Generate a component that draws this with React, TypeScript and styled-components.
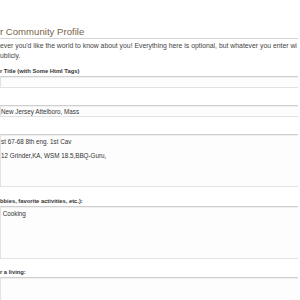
import { createGlobalStyle, styled } from "styled-components";

const GlobalStyle = createGlobalStyle`
  html, body {
    margin: 0;
    padding: 0;
    background: #ffffff;
  }
  body {
    font-family: "Liberation Sans", Arial, sans-serif;
    color: #3a3a3a;
    overflow: hidden;
  }
`;

const Page = styled.div`
  width: 298px;
  padding-top: 26px;
`;

const Title = styled.h1`
  margin: 0;
  font-size: 9.6px;
  font-weight: normal;
  line-height: 12px;
  color: #7a5f47;
  border-bottom: 1px solid #d6d6d6;
`;

const Intro = styled.p`
  margin: 2px 0 0;
  font-size: 6.85px;
  line-height: 10px;
  color: #444;
  white-space: nowrap;
`;

const Form = styled.div`
  display: flex;
  flex-direction: column;
  margin-top: 6px;
`;

const Field = styled.div<{ $gap?: number }>`
  display: flex;
  flex-direction: column;
  margin-bottom: ${(p) => p.$gap ?? 8}px;
`;

const Label = styled.div`
  font-size: 5.8px;
  font-weight: bold;
  line-height: 9px;
  height: 9px;
  color: #333;
  white-space: nowrap;
`;

const Box = styled.div<{ $rows?: number }>`
  height: ${(p) => (p.$rows ? p.$rows : 12)}px;
  box-sizing: border-box;
  border: 1px solid #e2e2e2;
  border-top: 1px solid #cfcfcf;
  border-right: none;
  box-shadow: inset 0 1px 1px #efefef;
  background: #fdfdfd;
  font-size: 6.3px;
  line-height: 7px;
  padding: ${(p) => (p.$rows ? "3px 0 0" : "2px 0 0")};
  white-space: pre;
  color: #333;
  overflow: hidden;
`;

export default function App() {
  return (
    <>
      <GlobalStyle />
      <Page>
        <Title>r Community Profile</Title>
        <Intro>
          ever you'd like the world to know about you! Everything here is optional, but whatever you enter wi
          <br />
          ublicly.
        </Intro>
        <Form>
          <Field>
            <Label>r Title (with Some Html Tags)</Label>
            <Box />
          </Field>
          <Field>
            <Label />
            <Box>New Jersey Attelboro, Mass</Box>
          </Field>
          <Field $gap={10}>
            <Label />
            <Box $rows={53}>{"st 67-68 8th eng. 1st Cav\n\n12 Grinder,KA, WSM 18.5,BBQ-Guru,"}</Box>
          </Field>
          <Field $gap={9}>
            <Label>bbies, favorite activities, etc.):</Label>
            <Box $rows={53}>{" Cooking"}</Box>
          </Field>
          <Field>
            <Label>r a living:</Label>
            <Box $rows={30} />
          </Field>
        </Form>
      </Page>
    </>
  );
}
